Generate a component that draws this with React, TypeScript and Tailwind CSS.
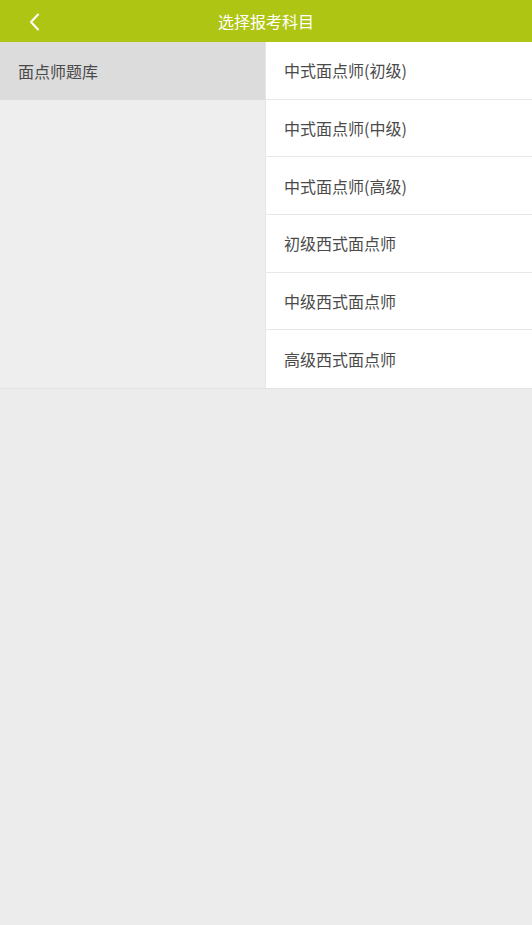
const subjects = [
  "中式面点师(初级)",
  "中式面点师(中级)",
  "中式面点师(高级)",
  "初级西式面点师",
  "中级西式面点师",
  "高级西式面点师",
];

export default function App() {
  return (
    <div
      className="flex flex-col min-h-[925px] bg-[#ececec] text-[#4a4a4a]"
      style={{ fontFamily: '"Noto Sans CJK SC", "Noto Sans", sans-serif' }}
    >
      <div className="relative flex items-center justify-center h-[42px] bg-[#afc514]">
        <button className="absolute left-[24px] top-[12px] w-[20px] h-[20px] flex items-center justify-center">
          <svg width="12" height="18" viewBox="0 0 12 18" fill="none">
            <path d="M10 1.5 L3 9 L10 16.5" stroke="white" strokeWidth="2" strokeLinecap="round" strokeLinejoin="round" />
          </svg>
        </button>
        <span className="text-white text-[16px]">选择报考科目</span>
      </div>
      <div className="flex border-b border-[#e3e3e3]">
        <div className="w-[266px] bg-[#eeeeee] border-r border-[#e6e6e6]">
          <div className="h-[57.67px] flex items-center pl-[18px] bg-[#dcdcdc] text-[16px]">面点师题库</div>
        </div>
        <div className="flex-1 bg-white">
          {subjects.map((s, i) => (
            <div
              key={s}
              className={
                "h-[57.67px] flex items-center pl-[18px] text-[16px] " +
                (i < subjects.length - 1 ? "border-b border-[#e8e8e8]" : "")
              }
            >
              {s}
            </div>
          ))}
        </div>
      </div>
    </div>
  );
}
